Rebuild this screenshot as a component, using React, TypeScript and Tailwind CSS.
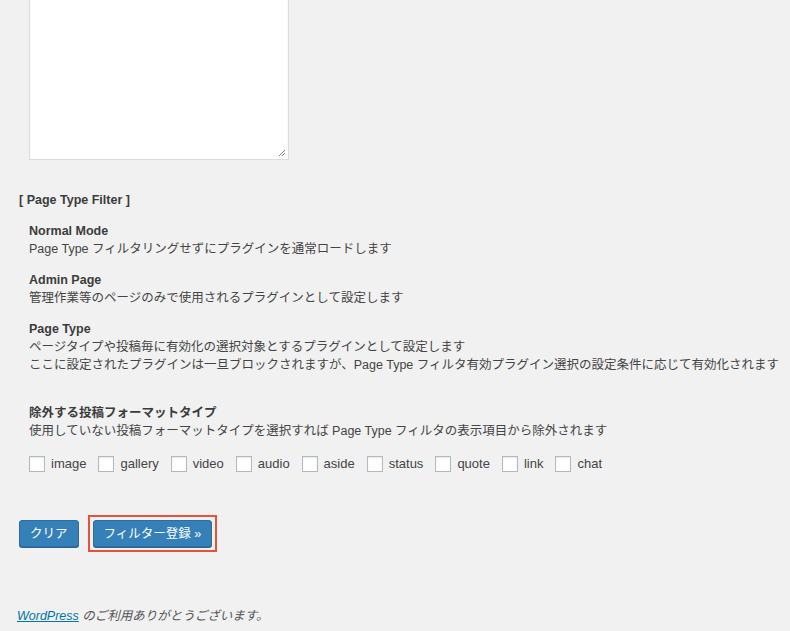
import React from "react";

const formats = ["image", "gallery", "video", "audio", "aside", "status", "quote", "link", "chat"];

export default function App() {
  return (
    <div
      className="min-h-[631px] w-[790px] overflow-hidden bg-[#f1f1f1] text-[#444] text-[12.5px] leading-[18px]"
      style={{ fontFamily: '"Liberation Sans", "Noto Sans CJK JP", sans-serif' }}
    >
      <div className="pl-[19px]">
        <div className="ml-[10px] mt-[-12px] h-[172px] w-[260px] border border-[#dcdcdc] bg-white shadow-[inset_0_1px_2px_rgba(0,0,0,0.07)] relative">
          <svg className="absolute right-[2px] bottom-[2px]" width="9" height="9" viewBox="0 0 9 9">
            <path d="M8 2 L2 8 M8 5 L5 8" stroke="#8a8a8a" strokeWidth="1" />
          </svg>
        </div>

        <div className="mt-[31px] font-bold text-[#3c3c3c]">[ Page Type Filter ]</div>

        <div className="pl-[10px]">
          <div className="mt-[13px] font-bold text-[#3c3c3c]">Normal Mode</div>
          <div>Page Type フィルタリングせずにプラグインを通常ロードします</div>

          <div className="mt-[13px] font-bold text-[#3c3c3c]">Admin Page</div>
          <div>管理作業等のページのみで使用されるプラグインとして設定します</div>

          <div className="mt-[13px] font-bold text-[#3c3c3c]">Page Type</div>
          <div className="whitespace-nowrap">ページタイプや投稿毎に有効化の選択対象とするプラグインとして設定します</div>
          <div className="whitespace-nowrap">ここに設定されたプラグインは一旦ブロックされますが、Page Type フィルタ有効プラグイン選択の設定条件に応じて有効化されます</div>

          <div className="mt-[30px] font-bold text-[#3c3c3c]">除外する投稿フォーマットタイプ</div>
          <div>使用していない投稿フォーマットタイプを選択すれば Page Type フィルタの表示項目から除外されます</div>

          <div className="mt-[15px] flex items-center">
            {formats.map((f) => (
              <label key={f} className="mr-[12px] flex items-center">
                <span className="mr-[6px] inline-block h-[16px] w-[16px] border border-[#b4b9be] bg-white shadow-[inset_0_1px_2px_rgba(0,0,0,0.1)]" />
                <span className="text-[13px]">{f}</span>
              </label>
            ))}
          </div>
        </div>

        <div className="mt-[42px] flex items-center">
          <button className="h-[27px] rounded-[3px] border border-[#2b6d9e] bg-[#3580b8] px-[10px] text-[12.5px] text-white shadow-[0_1px_0_#2a6593]">
            クリア
          </button>
          <div className="ml-[9px] border-2 border-[#e8513a] p-[3px]">
            <button className="block h-[27px] rounded-[3px] border border-[#2b6d9e] bg-[#3580b8] px-[10px] text-[12.5px] text-white shadow-[0_1px_0_#2a6593]">
              フィルター登録 »
            </button>
          </div>
        </div>
      </div>

      <div className="mt-[55px] pl-[17px] italic text-[#555]">
        <a className="text-[#0073aa] underline">WordPress</a> のご利用ありがとうございます。
      </div>
    </div>
  );
}
